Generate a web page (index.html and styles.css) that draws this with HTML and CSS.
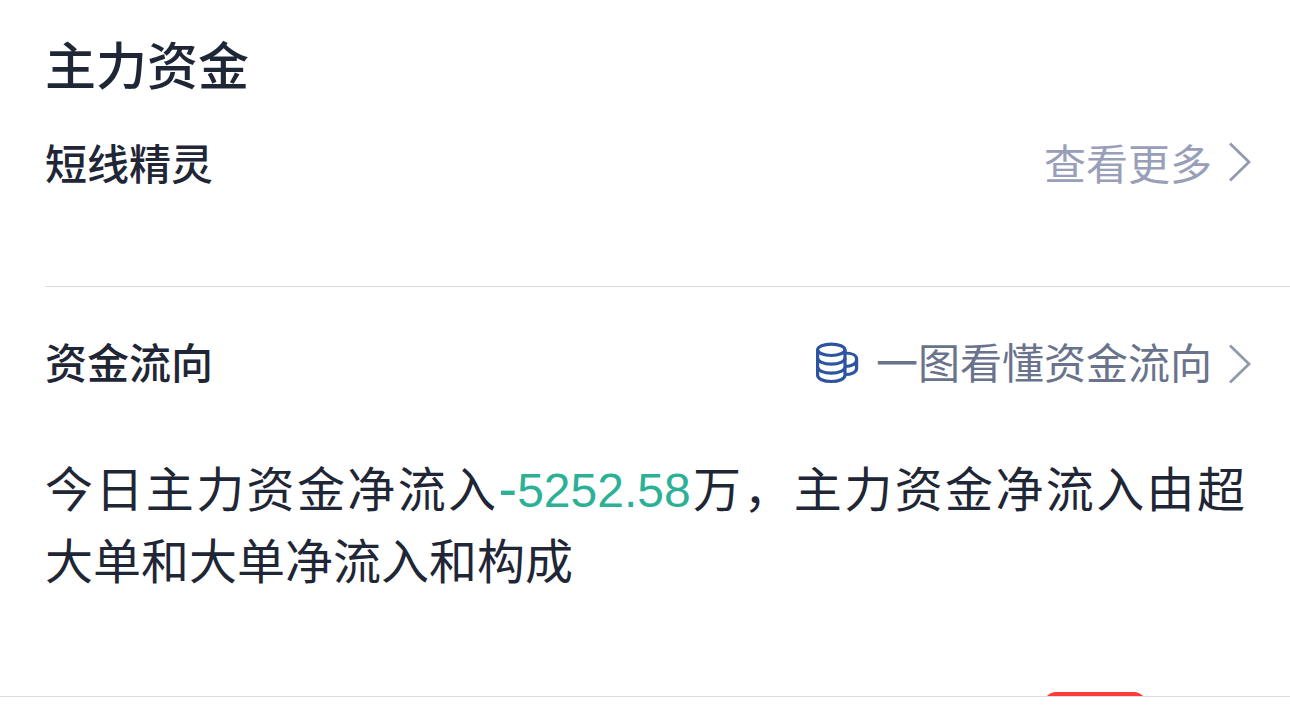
FILE: index.html
```html
<!DOCTYPE html>
<html lang="zh-CN">
<head>
    <meta charset="UTF-8">
    <meta name="viewport" content="width=device-width, initial-scale=1.0">
    <title>主力资金</title>
    <link rel="stylesheet" href="styles.css">
</head>
<body>
    <div class="panel">
        <section class="short-line">
            <h1>主力资金</h1>
            <div class="row">
                <h2>短线精灵</h2>
                <a class="more">
                    <span>查看更多</span>
                    <svg class="arrow" viewBox="0 0 24 40">
                        <path d="M2 1.500L21 20L2 38.500"/>
                    </svg>
                </a>
            </div>
        </section>

        <section class="flow">
            <div class="row">
                <h2>资金流向</h2>
                <a class="more guide">
                    <svg class="coins" viewBox="0 0 44 42">
                        <ellipse cx="16.300" cy="7.800" rx="13.700" ry="5.700"/>
                        <path d="M2.600 7.800v25.500c0 3.500 6 6.200 13.700 6.200s13.700-2.700 13.700-6.200V7.800"/>
                        <path d="M2.600 16c0 3.500 6 6.200 13.700 6.200s13.700-2.700 13.700-6.200"/>
                        <path d="M2.600 25c0 3.500 6 6.200 13.700 6.200s13.700-2.700 13.700-6.200"/>
                        <path d="M30 11c7 0 11.600 2.300 11.600 6v9.500c0 3.500-5 6-11.600 6"/>
                        <path d="M41.600 18c0 3.500-5 6.500-11.600 6.500"/>
                    </svg>
                    <span>一图看懂资金流向</span>
                    <svg class="arrow" viewBox="0 0 24 40">
                        <path d="M2 1.500L21 20L2 38.500"/>
                    </svg>
                </a>
            </div>
            <p>今日主力资金净流入<span class="down"><span class="sign">-</span>5252.58</span>万，主力资金净流入由超大单和大单净流入和构成</p>
            <div class="badge"></div>
        </section>
    </div>
</body>
</html>
```

FILE: styles.css
```css
* {
    box-sizing: border-box;
}
body {
    margin: 0;
    background-color: #fff;
    color: #1f2636;
    font-family: "Noto Sans CJK SC", sans-serif;
}
.panel {
    height: 697px;
    border-bottom: 1px solid #dcdde6;
    overflow: hidden;
}
h1, h2, p {
    margin: 0;
}
h1 {
    font-size: 51px;
    line-height: 76px;
    font-weight: 500;
}
h2 {
    font-size: 42px;
    line-height: 60px;
    font-weight: 500;
}
.short-line {
    height: 287px;
    margin-left: 45px;
    padding-top: 25px;
    border-bottom: 1px solid #dcdde6;
}
.short-line .row {
    margin-top: 31px;
}
.row {
    display: flex;
    justify-content: space-between;
    align-items: center;
    padding-right: 38px;
}
.more {
    display: flex;
    align-items: center;
    font-size: 42px;
    line-height: 60px;
    color: #999eb9;
}
.guide {
    color: #69738c;
}
.arrow {
    width: 24px;
    height: 40px;
    margin-left: 16px;
    fill: none;
    stroke: #929bad;
    stroke-width: 2.8;
}
.guide .arrow {
    margin-top: 5px;
}
.coins {
    width: 44px;
    height: 42px;
    margin: 4px 17px 0 0;
    fill: none;
    stroke: #2c54a0;
    stroke-width: 3.2;
}
.flow {
    padding: 44px 0 0 45px;
}
p {
    width: 1200px;
    margin-top: 59px;
    font-size: 48px;
    line-height: 72px;
    text-align: justify;
}
.down {
    font-family: "Liberation Sans", sans-serif;
    line-height: 1;
    color: #2cb196;
}
.sign {
    font-size: 56px;
    line-height: 48px;
    vertical-align: -1px;
}
.badge {
    width: 102px;
    height: 40px;
    margin: 98px 0 0 999px;
    border-radius: 12px;
    background-color: #ff3a3a;
}
```
